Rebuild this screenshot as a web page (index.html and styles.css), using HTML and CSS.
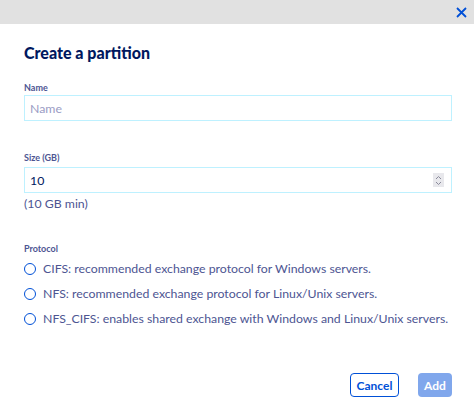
FILE: index.html
```html
<!DOCTYPE html>
<html lang="en">
<head>
<meta charset="utf-8">
<title>Create a partition</title>
<link rel="stylesheet" href="styles.css">
</head>
<body>
<div class="modal">
  <div class="modal-header">
    <button class="close" aria-label="Close">
      <svg width="11" height="11" viewBox="0 0 11 11"><path d="M1 1L10 10M10 1L1 10" stroke="#0050d7" stroke-width="1.8" fill="none"/></svg>
    </button>
  </div>
  <div class="modal-body">
    <h1 class="title">Create a partition</h1>
    <div class="field">
      <label class="label">Name</label>
      <div class="input"><span class="placeholder">Name</span></div>
    </div>
    <div class="field field-size">
      <label class="label">Size (GB)</label>
      <div class="input"><span class="value">10</span><span class="spinner"><svg width="7" height="11" viewBox="0 0 7 11"><path d="M1 4L3.5 1.5L6 4M1 7L3.5 9.5L6 7" stroke="#8a8a9a" stroke-width="1" fill="none"/></svg></span></div>
      <div class="hint">(10 GB min)</div>
    </div>
    <div class="field field-protocol">
      <label class="label">Protocol</label>
      <div class="radios">
        <div class="radio"><span class="circle"></span><span>CIFS: recommended exchange protocol for Windows servers.</span></div>
        <div class="radio"><span class="circle"></span><span>NFS: recommended exchange protocol for Linux/Unix servers.</span></div>
        <div class="radio"><span class="circle"></span><span>NFS_CIFS: enables shared exchange with Windows and Linux/Unix servers.</span></div>
      </div>
    </div>
  </div>
  <div class="modal-footer">
    <button class="btn btn-cancel">Cancel</button>
    <button class="btn btn-add">Add</button>
  </div>
</div>
</body>
</html>
```
FILE: styles.css
```css
* { box-sizing: border-box; }
html, body { margin: 0; padding: 0; background: #fff; }
body { font-family: "Lato", "Liberation Sans", sans-serif; color: #4d5592; width: 474px; height: 418px; overflow: hidden; }
.modal { display: flex; flex-direction: column; height: 418px; }
.modal-header { height: 24px; background: #e1e1e1; display: flex; justify-content: flex-end; align-items: center; padding-right: 7px; }
.close { border: 0; background: none; padding: 0; width: 11px; height: 11px; display: flex; }
.modal-body { padding: 0 22px 0 24px; flex: 1; }
.title { margin: 20px 0 0; font-size: 16px; line-height: 18px; font-weight: 900; color: #00185e; }
.field { margin-top: 20px; }
.label { display: block; font-size: 9px; line-height: 11px; font-weight: 700; color: #4d5592; margin-bottom: 2px; }
.input { height: 26px; border: 1px solid #bef1ff; display: flex; align-items: center; padding: 0 4px 0 5px; font-size: 12.3px; }
.placeholder { color: #9a9cc4; }
.value { color: #00185e; flex: 1; }
.spinner { width: 11px; height: 14px; background: #e8e8ec; display: flex; align-items: center; justify-content: center; margin-right: 3px; }
.field-size { margin-top: 31px; }
.field-size .label { margin-bottom: 4px; }
.hint { font-size: 12.3px; line-height: 16px; margin-top: 3px; }
.field-protocol { margin-top: 31px; }
.field-protocol .label { margin-bottom: 6px; }
.radios { display: flex; flex-direction: column; gap: 8px; }
.radio { display: flex; align-items: center; gap: 7px; font-size: 12.3px; line-height: 17px; white-space: nowrap; }
.circle { width: 12px; height: 12px; border: 1.5px solid #0050d7; border-radius: 50%; flex: none; }
.modal-footer { display: flex; justify-content: flex-end; gap: 19px; padding: 0 22px 21px 0; }
.btn { font-family: inherit; font-size: 12px; font-weight: 700; height: 24px; border-radius: 4px; padding: 0; }
.btn-cancel { width: 49px; background: #fff; color: #0050d7; border: 1.5px solid #0050d7; }
.btn-add { width: 34px; background: #80a7ec; color: #fff; border: 0; }
```
